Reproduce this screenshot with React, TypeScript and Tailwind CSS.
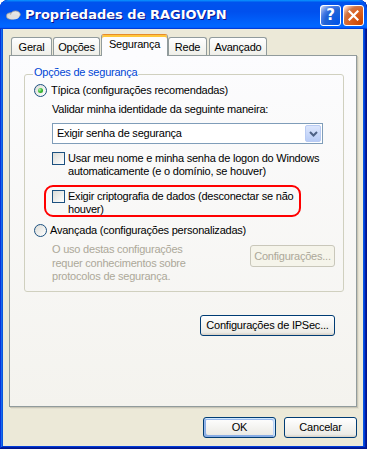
import React from "react";

const Radio = ({ checked }: { checked?: boolean }) => (
  <span className="w-[13px] h-[13px] rounded-full border border-[#1c5180] bg-[linear-gradient(135deg,#dcdcd7,#ffffff)] flex items-center justify-center shrink-0">
    {checked && (
      <span className="w-[5px] h-[5px] rounded-full bg-[radial-gradient(circle_at_35%_35%,#b6f5b2,#3fbf3a_45%,#1a8a16_100%)]" />
    )}
  </span>
);

const Checkbox = () => (
  <span className="w-[13px] h-[13px] border border-[#1c5180] bg-[linear-gradient(135deg,#dcdcd7,#ffffff)] shrink-0" />
);

const CloudIcon = () => (
  <svg width="15" height="10" viewBox="0 0 15 10" className="shrink-0">
    <ellipse cx="5" cy="6" rx="4.5" ry="3.2" fill="#d9d9d9" stroke="#9a9a9a" strokeWidth="0.8" />
    <ellipse cx="9.5" cy="4.5" rx="4.8" ry="3.6" fill="#e6e6e6" stroke="#9a9a9a" strokeWidth="0.8" />
    <ellipse cx="7.5" cy="6.8" rx="5.5" ry="2.6" fill="#e0e0e0" />
  </svg>
);

export default function App() {
  return (
    <div className="w-[367px] h-[449px] bg-white font-['Liberation_Sans',Arial,sans-serif] text-[11px] leading-[13px] tracking-[-0.22px] text-black">
      <div className="w-[367px] h-[449px] flex flex-col rounded-t-[8px] overflow-hidden bg-[#0855dd] shadow-[inset_-1px_-1px_#00138c,inset_1px_1px_#0831d9,inset_-2px_-2px_#001ea0,inset_2px_2px_#166aee,inset_-3px_-3px_#003bda,inset_3px_3px_#0855dd]">
        {/* Title bar */}
        <div className="h-[29px] shrink-0 flex items-center rounded-t-[8px] pl-[6px] pr-[3px] bg-[linear-gradient(180deg,#0997ff,#0053ee_8%,#0050ee_40%,#0066ff_88%,#0066ff_93%,#005bff_95%,#003dd7_96%,#003dd7)]">
          <CloudIcon />
          <span className="ml-[4px] text-white font-bold text-[13px] leading-[16px] tracking-normal font-['DejaVu_Sans',sans-serif] [text-shadow:1px_1px_#0f1089]">
            Propriedades de RAGIOVPN
          </span>
          <div className="ml-auto flex gap-[2px] mt-[2px]">
            <div className="w-[21px] h-[21px] rounded-[3px] border border-white flex items-center justify-center bg-[radial-gradient(circle_at_90%_90%,#0054e9_0%,#2263d5_55%,#4479e4_70%,#a3bbec_90%,#ffffff_100%)]">
              <span className="text-white font-bold text-[15px] leading-[15px] font-['DejaVu_Sans',sans-serif]">?</span>
            </div>
            <div className="w-[21px] h-[21px] rounded-[3px] border border-white flex items-center justify-center bg-[radial-gradient(circle_at_90%_90%,#cc4600_0%,#dc6527_55%,#cd7546_70%,#ffccb2_90%,#ffffff_100%)]">
              <svg width="11" height="11" viewBox="0 0 11 11">
                <path d="M1.5 1.5 L9.5 9.5 M9.5 1.5 L1.5 9.5" stroke="#ffffff" strokeWidth="2.2" strokeLinecap="square" />
              </svg>
            </div>
          </div>
        </div>

        {/* Body */}
        <div className="flex-1 ml-[3px] mr-[4px] mb-[3px] bg-[#ece9d8] flex flex-col pt-[5px]">
          {/* Tabs */}
          <div className="h-[21px] flex items-end ml-[8px]">
            <div className="w-[41px] h-[18px] border border-b-0 border-[#919b9c] rounded-t-[3px] bg-[linear-gradient(180deg,#ffffff,#fafaf9_26%,#f0f0ea_95%,#ecebe6)] flex items-center justify-center pt-[1px]">
              Geral
            </div>
            <div className="ml-[1px] w-[47px] h-[18px] border border-b-0 border-[#919b9c] rounded-t-[3px] bg-[linear-gradient(180deg,#ffffff,#fafaf9_26%,#f0f0ea_95%,#ecebe6)] flex items-center justify-center pt-[1px]">
              Opções
            </div>
            <div className="relative z-10 ml-[1px] -mb-[1px] w-[67px] h-[22px] border border-b-0 border-[#919b9c] border-t-[#e68b2c] rounded-t-[3px] bg-[#fcfcfe] shadow-[inset_0_2px_#ffc73c] flex items-center justify-center pb-[2px]">
              Segurança
            </div>
            <div className="w-[39px] h-[18px] border border-b-0 border-[#919b9c] rounded-t-[3px] bg-[linear-gradient(180deg,#ffffff,#fafaf9_26%,#f0f0ea_95%,#ecebe6)] flex items-center justify-center pt-[1px]">
              Rede
            </div>
            <div className="ml-[2px] w-[58px] h-[18px] border border-b-0 border-[#919b9c] rounded-t-[3px] bg-[linear-gradient(180deg,#ffffff,#fafaf9_26%,#f0f0ea_95%,#ecebe6)] flex items-center justify-center pt-[1px]">
              Avançado
            </div>
          </div>

          {/* Panel */}
          <div className="ml-[6px] w-[348px] h-[352px] shrink-0 border border-[#919b9c] bg-[linear-gradient(180deg,#fcfcfe,#f4f3ee)] shadow-[1px_1px_#c9c6b6,2px_2px_#e2dfd0] flex flex-col">
            <fieldset className="ml-[14px] mt-[10px] w-[320px] min-w-0 border border-[#d0d0bf] rounded-[3px] pl-[9px] pr-0 pt-0 pb-[7px]">
              <legend className="-ml-[1px] px-[1px] pb-[4px] text-[#0046d5] leading-[13px]">Opções de segurança</legend>

              <div className="mt-[1px] flex items-center h-[13px] gap-[4px]">
                <Radio checked />
                <span>Típica (configurações recomendadas)</span>
              </div>

              <div className="ml-[18px] mt-[6px]">Validar minha identidade da seguinte maneira:</div>

              <div className="ml-[18px] mt-[7px] w-[271px] h-[21px] border border-[#7f9db9] bg-white flex items-center">
                <span className="pl-[4px] flex-1">Exigir senha de segurança</span>
                <div className="w-[16px] h-[17px] mr-[1px] rounded-[2px] border border-[#b9cbf3] bg-[linear-gradient(180deg,#dce6fd,#b8ccf6)] flex items-center justify-center">
                  <svg width="9" height="6" viewBox="0 0 9 6">
                    <path d="M1 1 L4.5 4.5 L8 1" stroke="#4d6185" strokeWidth="2" fill="none" />
                  </svg>
                </div>
              </div>

              <div className="ml-[18px] mt-[8px] flex items-start gap-[3px]">
                <Checkbox />
                <span>
                  Usar meu nome e minha senha de logon do Windows
                  <br />
                  automaticamente (e o domínio, se houver)
                </span>
              </div>

              <div className="relative ml-[18px] mt-[12px] flex items-start gap-[3px]">
                <Checkbox />
                <span>
                  Exigir criptografia de dados (desconectar se não
                  <br />
                  houver)
                </span>
                <div className="absolute left-[-8px] top-[-5px] w-[257px] h-[32px] border-2 border-[#ff0000] rounded-[9px] pointer-events-none" />
              </div>

              <div className="mt-[8px] flex items-center h-[13px] gap-[3px]">
                <Radio />
                <span>Avançada (configurações personalizadas)</span>
              </div>

              <div className="mt-[6px] ml-[18px] flex items-start">
                <div className="text-[#aca899] leading-[13.5px]">
                  O uso destas configurações
                  <br />
                  requer conhecimentos sobre
                  <br />
                  protocolos de segurança.
                </div>
                <div className="ml-auto mr-[8px] mt-[2px] w-[85px] h-[22px] rounded-[3px] border border-[#c9c7ba] bg-[#f5f4ea] text-[#aca899] flex items-center justify-center">
                  Configurações...
                </div>
              </div>
            </fieldset>

            <div className="ml-[190px] mt-[23px] w-[135px] h-[21px] rounded-[3px] border border-[#003c74] bg-[linear-gradient(180deg,#ffffff,#ecebe6_86%,#d6d0c5)] flex items-center justify-center">
              Configurações de IPSec...
            </div>
          </div>

          {/* Bottom buttons */}
          <div className="mt-[10px] flex justify-end gap-[8px] pr-[6px]">
            <div className="w-[73px] h-[21px] rounded-[3px] border border-[#003c74] bg-[linear-gradient(180deg,#ffffff,#ecebe6_86%,#d6d0c5)] shadow-[inset_-1px_1px_#cee7ff,inset_1px_2px_#98b8ea,inset_-2px_2px_#bcd4f6,inset_1px_-1px_#89ade4,inset_2px_-2px_#89ade4] flex items-center justify-center">
              OK
            </div>
            <div className="w-[73px] h-[21px] rounded-[3px] border border-[#003c74] bg-[linear-gradient(180deg,#ffffff,#ecebe6_86%,#d6d0c5)] flex items-center justify-center">
              Cancelar
            </div>
          </div>
        </div>
      </div>
    </div>
  );
}
